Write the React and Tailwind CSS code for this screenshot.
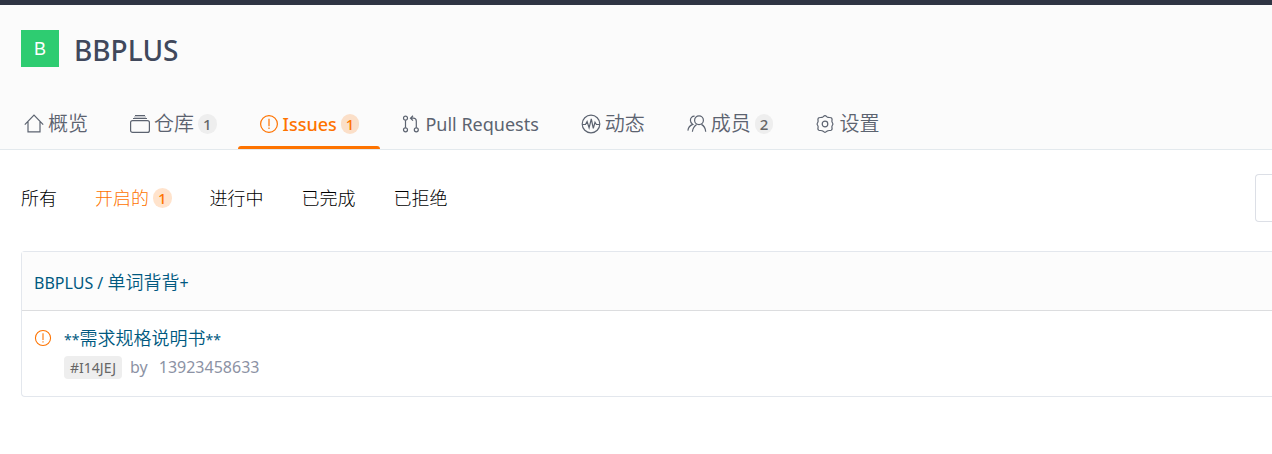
import React from 'react';
import clsx from 'clsx';

const Icon = ({ children, className = 'size-5' }) => (
    <svg
        viewBox="0 0 20 20"
        className={clsx('shrink-0', className)}
        fill="none"
        stroke="currentColor"
        strokeWidth="1.2"
        aria-hidden="true"
    >
        {children}
    </svg>
);

const HomeIcon = () => (
    <Icon>
        <path d="M.8 10.600 10 1l9.200 9.600M4 7.600v10.200h12V7.600" />
    </Icon>
);

const RepoIcon = () => (
    <Icon>
        <path d="M5 1.500h10M3 4.500h14" />
        <path d="M4 3h12" strokeWidth="2" opacity="0.3" />
        <rect x="0.6" y="6.600" width="18.8" height="11.800" rx="2" />
    </Icon>
);

const IssueIcon = ({ className }) => (
    <Icon className={className}>
        <circle cx="10" cy="10" r="8.400" />
        <path d="M10 4.700v7.600M10 13.500v1.600" />
    </Icon>
);

const PullIcon = () => (
    <Icon>
        <circle cx="4.500" cy="4.200" r="2" />
        <circle cx="4.500" cy="15.800" r="2" />
        <circle cx="15.300" cy="15.800" r="2" />
        <path d="M4.500 6.200v7.600M15.300 13.800V7c0-2-1-2.800-3-2.800H9.600M12 1.800 9.500 4.200 12 6.600" />
    </Icon>
);

const PulseIcon = () => (
    <Icon>
        <circle cx="10" cy="10" r="8.800" />
        <path d="M1.200 10.500h3.300l1.600-3 2 6.300L10.300 5l2 9.300 1.700-6 1.400 2.200h3.400" />
    </Icon>
);

const MembersIcon = () => (
    <Icon>
        <circle cx="12" cy="6.300" r="4.400" />
        <path d="M5.400 17.800c.3-4 2.200-6 4.200-7.400M14.400 10.400c2.600 1.400 4 3.400 4.300 7.400" />
        <path d="M7.600 2.200C5 2.100 3.400 4 3.400 6.200c0 2 1 3.400 2.400 4.200C3 11.400 1.200 13.600.9 16.600" />
    </Icon>
);

const GearIcon = () => (
    <Icon>
        <circle cx="10" cy="10" r="2.800" />
        <path d="M7.800 3C8.500 2.400 9 1.600 10 1.600s1.500.8 2.200 1.400c1 .7 2.600.3 3.900.7 1.400.6 1.100 2 .8 3.200-.3 1.300 1 2 1 3.100s-1.300 1.800-1 3.100c.3 1.200.6 2.600-.8 3.200-1.300.4-2.900 0-3.900.7-.7.600-1.200 1.400-2.200 1.400s-1.500-.8-2.200-1.400c-1-.7-2.600-.3-3.900-.7-1.400-.6-1.100-2-.8-3.200.3-1.300-1-2-1-3.100s1.300-1.800 1-3.100c-.3-1.200-.6-2.600.8-3.200C5.200 3.300 6.800 3.700 7.800 3Z" />
    </Icon>
);

const Badge = ({ active, children }) => (
    <span
        className={clsx(
            'inline-flex h-5 items-center justify-center rounded-full px-[5px] text-[15px] leading-5 font-medium',
            active ? 'bg-[#fe7300]/20 text-[#fe7300]' : 'bg-[#eeeeee] text-[#666]'
        )}
    >
        {children}
    </span>
);

const tabs = [
    { label: '概览', icon: HomeIcon },
    { label: '仓库', icon: RepoIcon, count: 1 },
    { label: 'Issues', icon: IssueIcon, count: 1, active: true, latin: true },
    { label: 'Pull Requests', icon: PullIcon, latin: true },
    { label: '动态', icon: PulseIcon },
    { label: '成员', icon: MembersIcon, count: 2 },
    { label: '设置', icon: GearIcon },
];

const filters = [
    { label: '所有' },
    { label: '开启的', count: 1, active: true },
    { label: '进行中' },
    { label: '已完成' },
    { label: '已拒绝' },
];

const Header = () => (
    <header className="border-t-[5px] border-b border-t-[#2f3443] border-b-[#e3e9ed] bg-[#fbfbfb]">
        <div className="flex items-start gap-[15px] pt-[25px] pl-[21px]">
            <span className="flex h-[37px] w-[38px] items-center justify-center bg-[#2ecc71] font-['Liberation_Sans'] text-lg text-white">
                B
            </span>
            <h1 className="text-[28px] leading-10 font-medium text-[#40485b]">BBPLUS</h1>
        </div>
        <nav className="mt-[29px] flex pl-[3px]">
            {tabs.map(({ label, icon: TabIcon, count, active, latin }) => (
                <a
                    key={label}
                    href="#"
                    className={clsx(
                        'relative flex h-[50px] items-center gap-1 px-[21px] whitespace-nowrap',
                        active ? 'font-medium text-[#fe7300]' : 'text-[#5c6370]'
                    )}
                >
                    <TabIcon />
                    <span className={latin ? 'text-[18px]' : 'text-[20px] font-[350]'}>{label}</span>
                    {count && <Badge active={active}>{count}</Badge>}
                    {active && <span className="absolute inset-x-0 bottom-0 h-[3px] rounded-t bg-[#fe7300]" />}
                </a>
            ))}
        </nav>
    </header>
);

const FilterBar = () => (
    <div className="flex h-[48px] items-center justify-between">
        <div className="flex items-center gap-[38px]">
            {filters.map(({ label, count, active }) => (
                <a
                    key={label}
                    href="#"
                    className={clsx(
                        'flex items-center gap-1 text-[18px] leading-6 font-light',
                        active ? 'text-[#fe7300]' : 'text-black'
                    )}
                >
                    {label}
                    {count && <Badge active={active}>{count}</Badge>}
                </a>
            ))}
        </div>
        <input
            type="text"
            aria-label="搜索"
            className="h-[48px] w-[17px] rounded-l border border-r-0 border-[#dcdfe6] bg-white outline-none"
        />
    </div>
);

const IssuePanel = () => (
    <section className="rounded-l border border-r-0 border-[#e3e7ed]">
        <h2 className="flex h-[59px] items-center border-b border-[#dcdddf] bg-[#fcfcfc] px-3 pt-0.5 text-[16px]">
            <a href="#" className="text-[#005980]">
                BBPLUS / <span className="text-[18px] font-[350]">单词背背</span>+
            </a>
        </h2>
        <div className="flex gap-3 px-3 pt-[13px] pb-4">
            <IssueIcon className="mt-[5px] size-[18px] text-[#fe7300]" />
            <div>
                <a href="#" className="block text-[14px] leading-7 text-[#005980]">
                    **<span className="text-[18px] font-[350]">需求规格说明书</span>**
                </a>
                <div className="flex items-center gap-2 text-[16px] leading-[26px] text-[#8c92a4]">
                    <span className="rounded bg-[#eeeeee] px-1.5 text-[14px] leading-[23px] text-[#666]">#I14JEJ</span>
                    <span>by</span>
                    <a href="#" className="pl-[3px]">13923458633</a>
                </div>
            </div>
        </div>
    </section>
);

export default function App() {
    return (
        <div className="min-h-screen bg-white font-['Noto_Sans','Noto_Sans_CJK_SC',sans-serif]">
            <Header />
            <main className="flex flex-col gap-[29px] pt-6 pl-[21px]">
                <FilterBar />
                <IssuePanel />
            </main>
        </div>
    );
}
